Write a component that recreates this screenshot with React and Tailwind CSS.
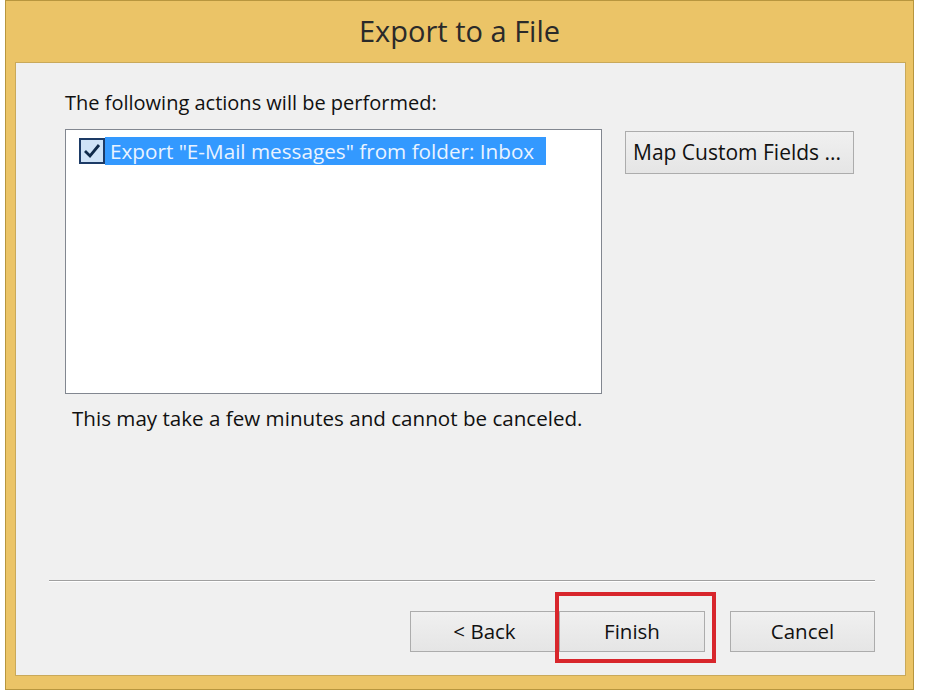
import React from 'react';

const font = { fontFamily: '"Open Sans", "Noto Sans", sans-serif' };

const Button = ({ children, className = '' }) => (
  <button
    className={`flex items-center justify-center border border-[#acacac] bg-gradient-to-b from-[#f0f0f0] to-[#e5e5e5] text-[20.5px] text-[#111] ${className}`}
  >
    {children}
  </button>
);

export default function App() {
  return (
    <div className="w-[928px] h-[694px] bg-white" style={font}>
      <div className="ml-[5px] w-[909px] h-[690px] bg-[#ebc467] border border-[#b8963e] flex flex-col">
        <div className="h-[61px] flex items-center justify-center text-[29px] text-[#2a2a2a] pb-[2px]">
          Export to a File
        </div>
        <div className="ml-[9px] mr-[7px] h-[614px] bg-[#f0f0f0] border border-[#c9a95a] flex flex-col">
          <div className="flex-1 pl-[49px] pr-[51px] pt-[27px]">
            <p className="text-[20px] text-[#111] leading-[26px]">The following actions will be performed:</p>
            <div className="flex mt-[13px]">
              <div className="w-[539px] h-[265px] bg-white border border-[#828790] pl-[13px] pt-[7px]">
                <div className="flex items-center h-[28px]">
                  <div className="w-[26px] h-[26px] border-2 border-[#1d3b66] bg-[#cfe3f7] flex items-center justify-center">
                    <svg width="20" height="18" viewBox="0 0 20 18">
                      <path d="M3 9 L8 14 L17 3" fill="none" stroke="#0f2a4a" strokeWidth="2.8" />
                    </svg>
                  </div>
                  <div className="h-[28px] bg-[#3399ff] text-[#e9f3ff] text-[20.7px] leading-[28px] pl-[5px] pr-[12px] whitespace-nowrap">
                    Export "E-Mail messages" from folder: Inbox
                  </div>
                </div>
              </div>
              <div className="ml-[23px] pt-[2px]">
                <Button className="w-[229px] h-[43px] justify-start pl-[7px] text-[21px]">Map Custom Fields ...</Button>
              </div>
            </div>
            <p className="mt-[11px] ml-[7px] text-[20.6px] text-[#111] leading-[26px]">
              This may take a few minutes and cannot be canceled.
            </p>
          </div>
          <div className="ml-[33px] mr-[30px] border-t border-[#a0a0a0] border-b-white border-b h-0" />
          <div className="h-[93px] flex items-start justify-end pr-[30px] pt-[29px]">
            <Button className="w-[149px] h-[41px]">&lt; Back</Button>
            <div className="relative">
              <Button className="w-[146px] h-[41px] border-[#3c9ee6] from-[#eaf6fd] to-[#d9effc]">Finish</Button>
              <div className="absolute left-[-4px] top-[-19px] w-[161px] h-[71px] border-[4px] border-[#d8262c] pointer-events-none" />
            </div>
            <Button className="ml-[25px] w-[145px] h-[41px]">Cancel</Button>
          </div>
        </div>
      </div>
    </div>
  );
}
